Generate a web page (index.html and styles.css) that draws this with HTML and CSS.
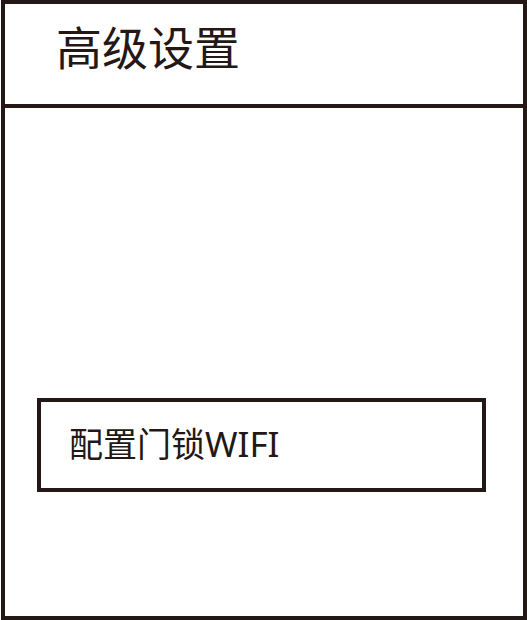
FILE: index.html
```html
<!DOCTYPE html>
<html lang="zh-CN">
<head>
<meta charset="utf-8">
<title>高级设置</title>
<link rel="stylesheet" href="styles.css">
</head>
<body>
<div class="frame">
  <header class="header"><h1 class="title">高级设置</h1></header>
  <main class="content">
    <div class="option">配置门锁<span class="latin">WIFI</span></div>
  </main>
</div>
</body>
</html>
```

FILE: styles.css
```css
html, body {
  margin: 0;
  padding: 0;
  background: #ffffff;
}
body {
  font-family: "Noto Sans CJK SC", "Noto Sans", sans-serif;
  color: #231815;
}
.frame {
  box-sizing: border-box;
  width: 526px;
  height: 620px;
  margin-left: 1px;
  border: 4px solid #231815;
  display: flex;
  flex-direction: column;
}
.header {
  box-sizing: border-box;
  height: 104px;
  border-bottom: 4px solid #231815;
  display: flex;
  align-items: center;
  padding-left: 51px;
  padding-bottom: 18px;
}
.title {
  margin: 0;
  font-size: 46px;
  font-weight: 400;
  line-height: 1;
}
.content {
  flex: 1;
  padding-top: 290px;
  padding-left: 32px;
}
.option {
  box-sizing: border-box;
  width: 449px;
  height: 94px;
  border: 4px solid #231815;
  display: flex;
  align-items: center;
  padding-left: 28px;
  padding-bottom: 4px;
  font-size: 34px;
  line-height: 1;
}
.latin {
  font-family: "Noto Sans", sans-serif;
  font-size: 35px;
}
```
